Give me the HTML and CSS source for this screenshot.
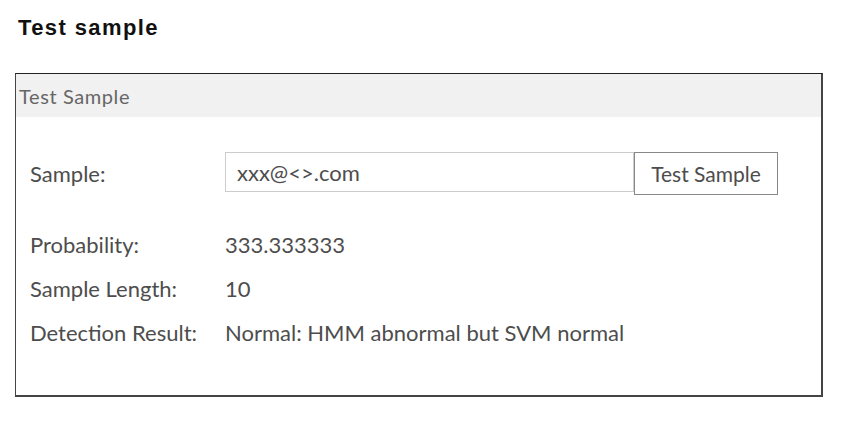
FILE: index.html
```html
<!DOCTYPE html>
<html lang="en">
<head>
  <meta charset="UTF-8"/>
  <title>Test sample</title>
  <link rel="stylesheet" href="styles.css">
</head>
<body>
  <h1 class="page-title">Test sample</h1>

  <div class="panel">
    <div class="panel-header">Test Sample</div>
    <div class="panel-body">
      <div class="sample-row">
        <label class="field-label" for="sample">Sample:</label>
        <div class="sample-input">
          <input type="text" id="sample" value="xxx@<>.com">
          <button type="button">Test Sample</button>
        </div>
      </div>

      <div class="result-row">
        <span class="field-label">Probability:</span>
        <span class="field-value">333.333333</span>
      </div>
      <div class="result-row">
        <span class="field-label">Sample Length:</span>
        <span class="field-value">10</span>
      </div>
      <div class="result-row">
        <span class="field-label">Detection Result:</span>
        <span class="field-value">Normal: HMM abnormal but SVM normal</span>
      </div>
    </div>
  </div>
</body>
</html>
```

FILE: styles.css
```css
body {
  margin: 0;
  padding: 15px 0 0 15px;
  background-color: #fff;
  font-family: Lato, 'Open Sans', sans-serif;
  color: #4d4d4d;
}

.page-title {
  margin: 0 0 0 3px;
  font-family: 'Liberation Sans', Arial, sans-serif;
  font-size: 22px;
  line-height: 26px;
  letter-spacing: 1.4px;
  font-weight: bold;
  color: #111;
}

.panel {
  width: 805px;
  height: 321px;
  margin-top: 32px;
  border: 1px solid #444;
  border-top-color: #222;
  border-bottom-width: 2px;
  border-right-width: 2px;
}

.panel-header {
  height: 43px;
  line-height: 44px;
  padding-left: 3px;
  background-color: #f1f1f1;
  font-size: 20px;
  letter-spacing: 0.6px;
  color: #666;
}

.panel-body {
  padding: 35px 0 0 14px;
}

.sample-row,
.result-row {
  display: grid;
  grid-template-columns: 195px 1fr;
  align-items: center;
  font-size: 22px;
}

.sample-row {
  margin-bottom: 27px;
}

.result-row {
  height: 44px;
}

.sample-input {
  display: flex;
  align-items: flex-start;
}

input {
  width: 409px;
  height: 40px;
  box-sizing: border-box;
  padding: 0 11px;
  border: 1px solid #ccc;
  font-family: inherit;
  font-size: 22px;
  color: #4d4d4d;
  outline: none;
}

button {
  width: 144px;
  height: 43px;
  box-sizing: border-box;
  border: 1px solid #888;
  background-color: #fff;
  font-family: inherit;
  font-size: 21px;
  color: #4d4d4d;
}
```
